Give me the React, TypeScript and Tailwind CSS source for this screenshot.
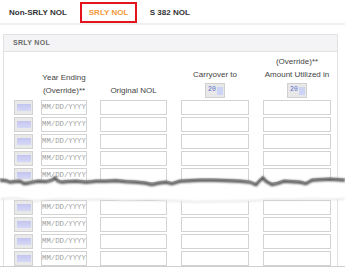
import React from 'react';

const upperEdge: [number, number][] = [
  [0, 9], [6, 9.5], [10, 11], [14, 10.5], [20, 10], [24, 12.5], [28, 12], [32, 11],
  [38, 10], [46, 10.5], [52, 9], [55, 6.5], [58, 10], [62, 11], [66, 10.5], [76, 10],
  [86, 11], [92, 10.5], [96, 10], [106, 10], [116, 9.5], [126, 10.5], [136, 11],
  [146, 12], [152, 13.5], [158, 12], [166, 11], [172, 12.5], [180, 10], [190, 9.5],
  [200, 9], [214, 9], [228, 9.5], [240, 10], [250, 11], [256, 13.5], [260, 9],
  [263, 6.5], [266, 10], [272, 13.5], [278, 12], [284, 10], [292, 10.5], [300, 11],
  [306, 12.5], [312, 9], [320, 8.5], [330, 8], [338, 8.5], [345, 9],
];

const lowerEdge: [number, number][] = [
  [0, 29], [12, 28], [24, 29.5], [36, 31], [48, 30], [62, 29], [80, 30],
  [100, 29.5], [124, 30.5], [150, 30], [176, 31], [196, 32], [220, 31.5],
  [250, 31], [270, 29.5], [290, 30], [310, 29], [330, 29.5], [345, 29],
];

const toLine = (pts: [number, number][]) =>
  pts.map(([x, y], i) => `${i === 0 ? 'M' : 'L'}${x} ${y}`).join(' ');

const gapShape =
  toLine(upperEdge) +
  ' ' +
  [...lowerEdge]
    .reverse()
    .map(([x, y]) => `L${x} ${y}`)
    .join(' ') +
  ' Z';

function TornEdge() {
  return (
    <svg
      className="absolute left-0 top-[170px]"
      width="345"
      height="36"
      viewBox="0 0 345 36"
    >
      <defs>
        <filter id="tear-blur" x="-5%" y="-50%" width="110%" height="200%">
          <feGaussianBlur stdDeviation="0.9" />
        </filter>
      </defs>
      <path d={gapShape} fill="#ffffff" />
      <path
        d={toLine(upperEdge.map(([x, y]) => [x, y + 1.4] as [number, number]))}
        fill="none"
        stroke="#444444"
        strokeWidth="2.6"
        filter="url(#tear-blur)"
      />
      <path d={toLine(upperEdge)} fill="none" stroke="#7a7a7a" strokeWidth="0.8" />
      <path
        d={toLine(lowerEdge)}
        fill="none"
        stroke="#d4d4d4"
        strokeWidth="1"
        filter="url(#tear-blur)"
      />
    </svg>
  );
}

function RowButton() {
  return (
    <div className="flex h-[15px] w-[19px] items-center justify-center border border-[#d2d2d2] bg-[#e9e9e9]">
      <div className="h-[7px] w-[14px] bg-gradient-to-b from-[#c3c5f0] to-[#d6d8f6]" />
    </div>
  );
}

function YearButton() {
  return (
    <div className="mt-[2px] flex h-[15px] w-[20px] items-center border border-[#d0d0d0] bg-[#e8e8e8] pl-[2px]">
      <span className="font-['Liberation_Mono',monospace] text-[6.5px] leading-none text-[#5b6bd0]">20</span>
      <span className="ml-[1px] h-[8px] w-[6px] bg-[#cdd3f5]" />
    </div>
  );
}

function Row() {
  return (
    <div className="flex h-[15px] shrink-0 pl-[10px]">
      <RowButton />
      <div className="ml-[8px] flex w-[46px] items-center overflow-hidden border border-[#d3d3d3] bg-white font-['Liberation_Mono',monospace] text-[7.3px] leading-none text-[#a0a0a0]">
        MM/DD/YYYY
      </div>
      <div className="ml-[13px] w-[67px] border border-[#d3d3d3] bg-white" />
      <div className="ml-[14px] w-[68px] border border-[#d3d3d3] bg-white" />
      <div className="ml-[14px] w-[68px] border border-[#d3d3d3] bg-white" />
    </div>
  );
}

export default function App() {
  return (
    <div className="relative h-[268px] w-[345px] overflow-hidden bg-white font-['Liberation_Sans',Arial,sans-serif]">
      <div className="flex h-[23px] items-start text-[8px] font-bold">
        <span className="ml-[9px] mt-[7px] text-[#333]">Non-SRLY NOL</span>
        <div className="ml-[13px] mt-[2px] flex h-[21px] w-[57px] items-center border-2 border-[#e3141b] pl-[7px] text-[#f39a3c]">
          SRLY NOL
        </div>
        <span className="ml-[13px] mt-[7px] text-[#333]">S 382 NOL</span>
      </div>
      <div className="h-[2px] bg-[#efefef]" />

      <div className="ml-[3px] mt-[9px] h-[155px] w-[335px] overflow-hidden border-x border-t border-[#e2e2e2]">
        <div className="flex h-[17px] items-center border-b border-[#e2e2e2] bg-[#f4f4f6] pl-[9px] text-[7px] font-bold tracking-[0.3px] text-[#6b6b6b]">
          SRLY NOL
        </div>

        <div className="flex h-[48px] items-end pb-[2px] pl-[10px] text-[8px] leading-[13px] text-[#444]">
          <div className="w-[19px]" />
          <div className="ml-[8px] flex w-[46px] flex-col items-center whitespace-nowrap pb-[1px]">
            <span>Year Ending</span>
            <span>(Override)**</span>
          </div>
          <div className="ml-[13px] flex w-[67px] flex-col items-center whitespace-nowrap pb-[1px]">
            <span>Original NOL</span>
          </div>
          <div className="ml-[14px] flex w-[68px] flex-col items-center whitespace-nowrap">
            <span>Carryover to</span>
            <YearButton />
          </div>
          <div className="ml-[14px] flex w-[68px] flex-col items-center whitespace-nowrap">
            <span>(Override)**</span>
            <span>Amount Utilized in</span>
            <YearButton />
          </div>
        </div>

        <div className="flex flex-col gap-[2px]">
          <Row />
          <Row />
          <Row />
          <Row />
          <Row />
        </div>
      </div>

      <div className="ml-[3px] flex h-[77px] w-[335px] flex-col justify-end gap-[2px] overflow-hidden border-x border-[#e2e2e2]">
        <Row />
        <Row />
        <Row />
        <Row />
        <Row />
      </div>
      <div className="h-px w-full bg-[#cfcfcf]" />

      <TornEdge />
    </div>
  );
}
